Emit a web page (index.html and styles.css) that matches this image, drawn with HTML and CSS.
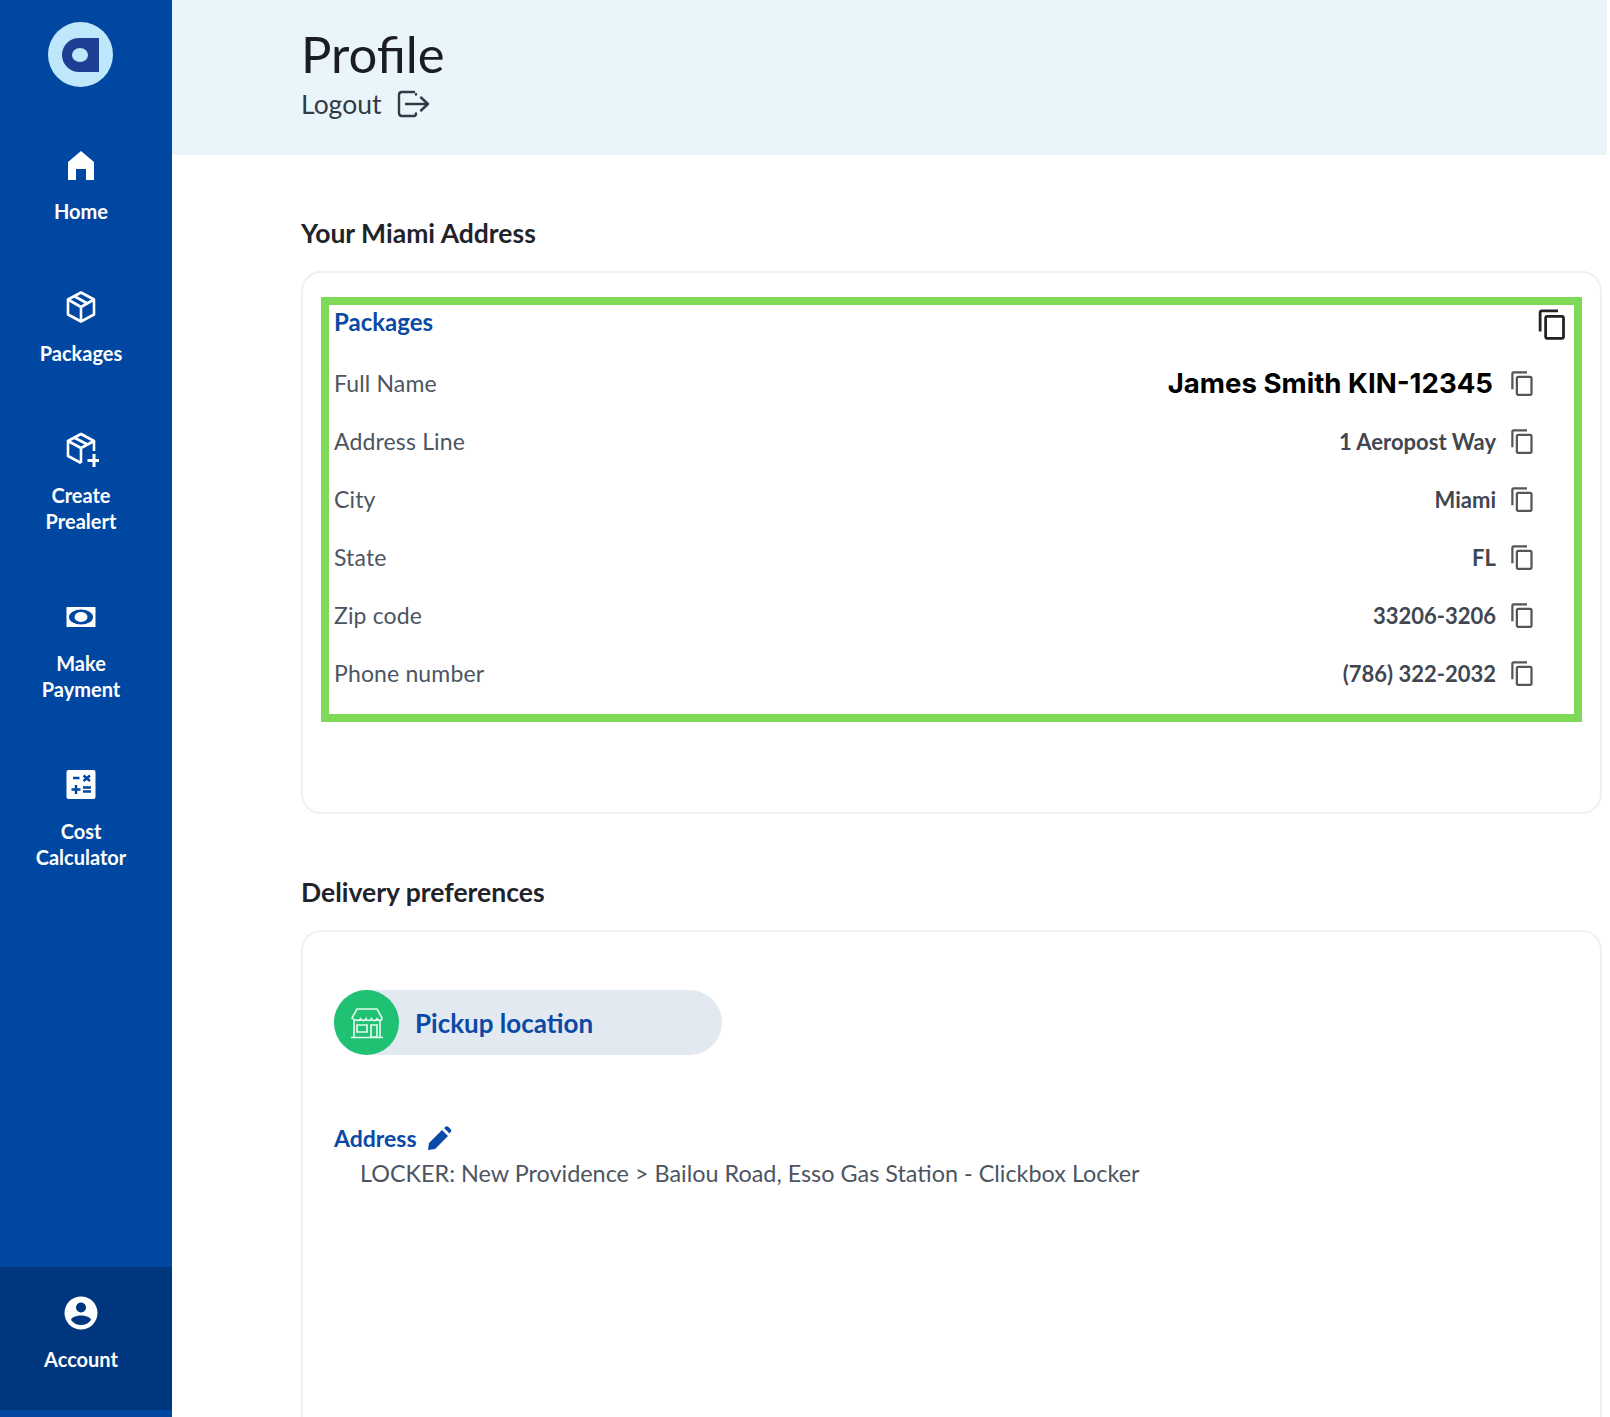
FILE: index.html
```html
<!DOCTYPE html>
<html>
    <head>
        <title>Profile</title>
        <link rel="stylesheet" href="styles.css">
    </head>
    <body>
        <svg class="sprite" width="0" height="0">
            <symbol id="copy" viewBox="0 0 24 24">
                <path d="M16 1H4c-1.1 0-2 .9-2 2v14h2V3h12V1zm3 4H8c-1.1 0-2 .9-2 2v14c0 1.1.9 2 2 2h11c1.1 0 2-.9 2-2V7c0-1.1-.9-2-2-2zm0 16H8V7h11v14z"/>
            </symbol>
        </svg>
        <div class="page">
            <nav class="sidebar">
                <div class="logo">
                    <svg width="65" height="65" viewBox="0 0 65 65">
                        <circle cx="32.5" cy="32.5" r="32.5" fill="#bfe7fb"/>
                        <circle cx="31" cy="33" r="17" fill="#1c3f94"/>
                        <path d="M31 16H51V50H31z" fill="#1c3f94"/>
                        <ellipse cx="32" cy="33" rx="8" ry="7" fill="#bfe7fb"/>
                    </svg>
                </div>
                <a class="nav-item">
                    <svg class="nav-icon" viewBox="0 0 36 36"><path d="M18 4 31 15v18H23V22H13V33H5V15z" fill="#fff"/></svg>
                    <span>Home</span>
                </a>
                <a class="nav-item">
                    <svg class="nav-icon" viewBox="0 0 36 36" fill="none" stroke="#fff" stroke-width="2.6" stroke-linejoin="round"><path d="M18 3.5 31 10.500V25.500L18 32.500 5 25.500V10.500z"/><path d="M5 10.500 18 18 31 10.500M18 18V32.500M11 7 24.500 14.500"/></svg>
                    <span>Packages</span>
                </a>
                <a class="nav-item">
                    <svg class="nav-icon" viewBox="0 0 36 36" fill="none" stroke="#fff" stroke-width="2.6" stroke-linejoin="round"><path d="M18 32 5 25V10L18 3 31 10V20"/><path d="M5 10 18 17 31 10M18 17V32M11 6.500 24.500 13.500"/><path d="M31 23V36M24.500 29.500H37.500" stroke-width="3"/></svg>
                    <span>Create<br>Prealert</span>
                </a>
                <a class="nav-item">
                    <svg class="nav-icon" viewBox="0 0 36 36"><rect x="3.500" y="8" width="29" height="20" fill="#fff"/><ellipse cx="18" cy="18" rx="12" ry="7.500" fill="#0047a2"/><ellipse cx="18" cy="18" rx="6.500" ry="5" fill="#fff"/></svg>
                    <span>Make<br>Payment</span>
                </a>
                <a class="nav-item">
                    <svg class="nav-icon" viewBox="0 0 36 36"><rect x="3.500" y="3" width="29" height="29" rx="2" fill="#fff"/><path d="M10 11H16.500M20.500 8.500 27 14M27 8.500 20.500 14M8.500 22.500H17.500M13 18V27M20 20.500H28M20 24.500H28" stroke="#0047a2" stroke-width="2.400" fill="none"/></svg>
                    <span>Cost<br>Calculator</span>
                </a>
                <a class="nav-item account">
                    <svg class="nav-icon" viewBox="0 0 36 36"><circle cx="18" cy="18" r="16.500" fill="#fff"/><circle cx="18" cy="12.500" r="5" fill="#00367d"/><path d="M18 20.500C12 20.500 8 23 8 25C10 28 14 30 18 30S26 28 28 25C28 23 24 20.500 18 20.500z" fill="#00367d"/></svg>
                    <span>Account</span>
                </a>
            </nav>

            <div class="main">
                <header class="top">
                    <h1>Profile</h1>
                    <div class="logout">
                        <span>Logout</span>
                        <svg width="34" height="30" viewBox="0 0 34 30" fill="none" stroke="#333a45" stroke-width="2.400" stroke-linecap="round" stroke-linejoin="round"><path d="M18 3H6C4 3 3 4 3 6V24C3 26 4 27 6 27H18C19.500 27 20 26 20 24.500M20 5.500V5"/><path d="M10 15H32M25 8.500 32 15 25 21.500"/></svg>
                    </div>
                </header>

                <section class="content">
                    <h2>Your Miami Address</h2>
                    <div class="card address-card">
                        <div class="highlight">
                            <div class="packages-head">
                                <span class="blue-title">Packages</span>
                                <svg class="copy-big"><use href="#copy"/></svg>
                            </div>
                            <div class="row">
                                <span class="label">Full Name</span>
                                <span class="value name">James Smith KIN-12345</span>
                                <svg class="copy"><use href="#copy"/></svg>
                            </div>
                            <div class="row">
                                <span class="label">Address Line</span>
                                <span class="value">1 Aeropost Way</span>
                                <svg class="copy"><use href="#copy"/></svg>
                            </div>
                            <div class="row">
                                <span class="label">City</span>
                                <span class="value">Miami</span>
                                <svg class="copy"><use href="#copy"/></svg>
                            </div>
                            <div class="row">
                                <span class="label">State</span>
                                <span class="value">FL</span>
                                <svg class="copy"><use href="#copy"/></svg>
                            </div>
                            <div class="row">
                                <span class="label">Zip code</span>
                                <span class="value">33206-3206</span>
                                <svg class="copy"><use href="#copy"/></svg>
                            </div>
                            <div class="row">
                                <span class="label">Phone number</span>
                                <span class="value">(786) 322-2032</span>
                                <svg class="copy"><use href="#copy"/></svg>
                            </div>
                        </div>
                    </div>

                    <h2 class="second">Delivery preferences</h2>
                    <div class="card delivery-card">
                        <div class="pill">
                            <div class="pill-icon">
                                <svg width="34" height="32" viewBox="0 0 34 32" fill="none" stroke="#e4f7ec" stroke-width="1.700"><path d="M7 2H27L32 11C32 14 28 14 27 12 26 14 22 14 21.500 12 20.500 14 16.500 14 16 12 15 14 11.500 14 10.500 12 9.500 14 5 14 2 11z"/><path d="M4 13V30M30 13V30M1 30.500H33M7 18H17V25H7zM21 18H27V30H21z"/></svg>
                            </div>
                            <span>Pickup location</span>
                        </div>
                        <div class="address-head">
                            <span class="blue-title small">Address</span>
                            <svg width="26" height="26" viewBox="0 0 26 26"><path d="M2 25 3 18 16 5 22 11 9 24zM18 3 20 1.500Q21 1 22 1.500L25 4.500Q25.500 5.500 25 6.500L23.500 8.500z" fill="#0b49a6"/></svg>
                        </div>
                        <p class="locker">LOCKER: New Providence &gt; Bailou Road, Esso Gas Station - Clickbox Locker</p>
                    </div>
                </section>
            </div>
        </div>
    </body>
</html>
```

FILE: styles.css
```css
html, body {
    margin: 0;
    height: 1417px;
    overflow: hidden;
    background: #fff;
}
body {
    font-family: "Lato", "Open Sans", sans-serif;
    color: #4c5561;
}
.sprite {
    position: absolute;
}
.page {
    display: flex;
    height: 1417px;
}

/* sidebar */
.sidebar {
    width: 172px;
    flex: none;
    display: flex;
    flex-direction: column;
    background: #0047a2;
    padding-bottom: 7px;
    box-sizing: border-box;
}
.logo {
    display: flex;
    justify-content: center;
    padding: 22px 11px 0 0;
    height: 125px;
    box-sizing: border-box;
}
.nav-item {
    display: flex;
    flex-direction: column;
    align-items: center;
    padding-right: 10px;
    height: 142px;
    box-sizing: border-box;
    color: #fff;
    font-size: 20px;
    font-weight: 700;
    line-height: 26px;
    text-align: center;
}
.nav-item:nth-of-type(n+3) {
    height: 168px;
}
.nav-icon {
    width: 36px;
    height: 36px;
    margin: 22px 0 15px;
    flex: none;
}
.nav-item.account {
    margin-top: auto;
    height: 143px;
    background: #00367d;
}
.nav-item.account .nav-icon {
    margin: 28px 0 15px;
}

/* header */
.main {
    flex: 1;
    min-width: 0;
}
.top {
    height: 155px;
    margin-right: 3px;
    background: #e9f5fb;
    padding: 24px 0 0 129px;
    box-sizing: border-box;
}
h1 {
    margin: 0;
    font-size: 50.800px;
    font-weight: 400;
    line-height: 60px;
    color: #1a1d22;
}
.logout {
    display: flex;
    align-items: center;
    gap: 15px;
    margin-top: 5px;
    height: 30px;
    font-size: 26.500px;
    color: #333a45;
}

/* content */
.content {
    padding: 0 8px 0 129px;
}
h2 {
    margin: 0;
    padding-top: 59px;
    height: 116px;
    box-sizing: border-box;
    font-size: 26.500px;
    font-weight: 700;
    line-height: 38px;
    color: #1f242b;
}
.card {
    border: 2px solid #eef0f5;
    border-radius: 20px;
    box-sizing: border-box;
}
.address-card {
    height: 543px;
    padding: 24px 18px 0 18px;
}
.delivery-card {
    height: 487px;
    border-bottom: 0;
    border-radius: 20px 20px 0 0;
    padding: 58px 31px 0;
}
.highlight {
    border: 8px solid #7ed957;
    height: 425px;
    box-sizing: border-box;
    padding: 0 5px 0 5px;
}

.blue-title {
    font-size: 24px;
    font-weight: 700;
    color: #0b49a6;
}
.blue-title.small {
    font-size: 23px;
}
.packages-head {
    display: flex;
    justify-content: space-between;
    height: 49px;
    line-height: 34px;
}
.copy-big {
    width: 33px;
    height: 33px;
    fill: #222;
    margin-top: 3px;
}
.row {
    display: flex;
    align-items: center;
    height: 58px;
    padding-right: 33px;
    font-size: 23px;
}
.label {
    flex: 1;
    letter-spacing: .15px;
}
.value {
    font-size: 22px;
    font-weight: 700;
    color: #3f4752;
}
.value.name {
    font-family: "Inter", sans-serif;
    font-size: 27.600px;
    font-weight: 700;
    color: #000;
    margin-right: 3px;
}
.copy {
    width: 27px;
    height: 27px;
    fill: #555;
    margin-left: 13px;
}

/* delivery */
.pill {
    display: flex;
    align-items: center;
    gap: 16px;
    width: 388px;
    height: 65px;
    border-radius: 33px;
    background: #e2e9f0;
    font-size: 26px;
    font-weight: 700;
    color: #0b49a6;
}
.pill-icon {
    width: 65px;
    height: 65px;
    border-radius: 50%;
    background: #1fc173;
    display: flex;
    align-items: center;
    justify-content: center;
}
.address-head {
    display: flex;
    align-items: center;
    gap: 9px;
    margin-top: 65px;
    height: 36px;
}
.locker {
    margin: 0;
    padding: 2px 0 0 26px;
    font-size: 23.400px;
    line-height: 30px;
}
```
